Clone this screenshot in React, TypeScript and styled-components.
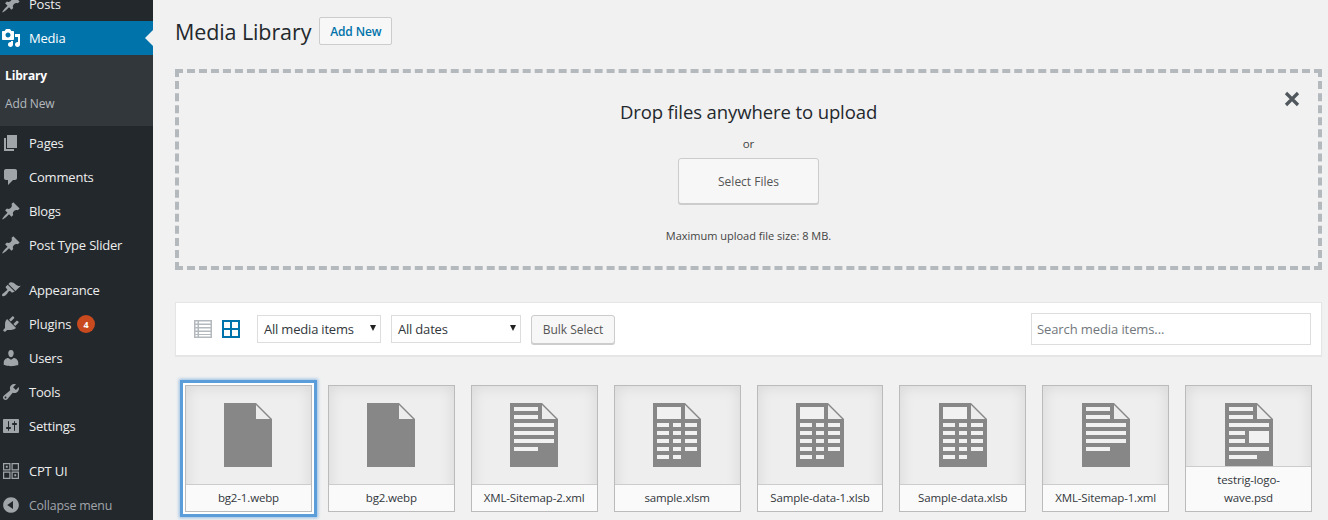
import React from "react";
import styled, { createGlobalStyle } from "styled-components";

const FONT = `"Open Sans", "Noto Sans", "Liberation Sans", sans-serif`;

const Global = createGlobalStyle`
  html, body { margin: 0; padding: 0; width: 1328px; height: 520px; overflow: hidden; background: #f1f1f1; }
  * { box-sizing: border-box; }
  body { font-family: ${FONT}; color: #444; }
`;

const Page = styled.div`
  display: flex;
  width: 1328px;
  height: 520px;
  overflow: hidden;
`;

const Sidebar = styled.nav`
  flex: 0 0 153px;
  height: 520px;
  background: #23282d;
  overflow: hidden;
`;

const Menu = styled.div`
  margin-top: -13px;
  display: flex;
  flex-direction: column;
`;

const MenuRow = styled.div<{ $active?: boolean; $gap?: number; $dim?: boolean }>`
  position: relative;
  display: flex;
  align-items: center;
  flex: 0 0 34px;
  height: 34px;
  margin-top: ${(p) => p.$gap ?? 0}px;
  background: ${(p) => (p.$active ? "#0073aa" : "transparent")};
  color: ${(p) => (p.$active ? "#fff" : p.$dim ? "#a0a5aa" : "#eee")};
  font-size: ${(p) => (p.$dim ? 12.4 : 13)}px;
  letter-spacing: -0.2px;
  svg { flex: 0 0 20px; margin-left: 1px; width: 20px; height: 20px; fill: ${(p) => (p.$active ? "#fff" : "#a0a5aa")}; }
`;

const MenuLabel = styled.span`
  margin-left: 8px;
  white-space: nowrap;
`;

const ActiveArrow = styled.span`
  position: absolute;
  right: 0;
  top: 9px;
  width: 0;
  height: 0;
  border: 8px solid transparent;
  border-left-width: 0;
  border-right-color: #f1f1f1;
`;

const Badge = styled.span`
  display: inline-flex;
  align-items: center;
  justify-content: center;
  width: 18px;
  height: 18px;
  margin-left: 6px;
  border-radius: 50%;
  background: #ca4a1f;
  color: #fff;
  font-size: 9px;
  font-weight: 700;
  letter-spacing: 0;
`;

const Submenu = styled.div`
  flex: 0 0 71px;
  height: 71px;
  padding-top: 7px;
  background: #32373c;
  display: flex;
  flex-direction: column;
`;

const SubItem = styled.div<{ $current?: boolean }>`
  height: 28px;
  line-height: 28px;
  padding-left: 5px;
  font-size: 12px;
  letter-spacing: -0.15px;
  font-weight: ${(p) => (p.$current ? 700 : 400)};
  color: ${(p) => (p.$current ? "#fff" : "#b4b9be")};
`;

const Main = styled.main`
  flex: 1;
  min-width: 0;
  padding: 0 6px 0 22px;
  display: flex;
  flex-direction: column;
`;

const Heading = styled.div`
  display: flex;
  align-items: center;
  height: 69px;
  padding-bottom: 7px;
`;

const Title = styled.h1`
  margin: 0;
  font-size: 21.5px;
  font-weight: 400;
  letter-spacing: -0.1px;
  color: #23282d;
`;

const AddNew = styled.button`
  margin-left: 8px;
  height: 28px;
  width: 73px;
  padding: 0;
  border: 1px solid #ccc;
  border-radius: 2px;
  background: #f7f7f7;
  color: #0073aa;
  font: 600 12px ${FONT};
  letter-spacing: -0.1px;
`;

const Uploader = styled.section`
  position: relative;
  height: 201px;
  border: 4px dashed #b4b9be;
  display: flex;
  flex-direction: column;
  align-items: center;
`;

const DropTitle = styled.div`
  margin-top: 26px;
  font-size: 18.5px;
  line-height: 26px;
  letter-spacing: -0.1px;
  color: #23282d;
`;

const OrText = styled.div`
  margin-top: 11px;
  font-size: 11.5px;
  line-height: 16px;
  color: #444;
`;

const SelectFiles = styled.button`
  margin-top: 6px;
  width: 141px;
  height: 46px;
  padding: 0;
  border: 1px solid #ccc;
  border-radius: 3px;
  background: #f7f7f7;
  box-shadow: 0 1px 0 #ccc;
  color: #555;
  font: 400 12px ${FONT};
`;

const MaxSize = styled.div`
  margin-top: 24px;
  font-size: 11px;
  line-height: 16px;
  color: #444;
`;

const CloseX = styled.svg`
  position: absolute;
  top: 16px;
  right: 16px;
  width: 20px;
  height: 20px;
  fill: none;
  stroke: #50575d;
  stroke-width: 3.2;
`;

const Toolbar = styled.section`
  margin-top: 32px;
  height: 54px;
  flex: 0 0 54px;
  display: flex;
  align-items: center;
  padding-left: 18px;
  background: #fff;
  border: 1px solid #e5e5e5;
  box-shadow: 0 1px 1px rgba(0, 0, 0, 0.04);
`;

const ViewIcon = styled.svg<{ $on?: boolean }>`
  width: 18px;
  height: 18px;
  margin-right: 10px;
  flex: none;
  color: ${(p) => (p.$on ? "#0073aa" : "#b4b9be")};
`;

const FakeSelect = styled.div<{ $w: number }>`
  position: relative;
  display: flex;
  align-items: center;
  width: ${(p) => p.$w}px;
  height: 28px;
  margin-right: 10px;
  padding-left: 6px;
  background: #fff;
  border: 1px solid #ddd;
  font-size: 13px;
  letter-spacing: -0.2px;
  color: #32373c;
  &:first-of-type { margin-left: 7px; }
  &::after {
    content: "";
    position: absolute;
    right: 4px;
    top: 9px;
    border-style: solid;
    border-width: 6px 3.5px 0;
    border-color: #222 transparent transparent;
  }
`;

const Bulk = styled.button`
  width: 84px;
  height: 29px;
  padding: 0;
  border: 1px solid #ccc;
  border-radius: 3px;
  background: #f7f7f7;
  box-shadow: 0 1px 0 #ccc;
  color: #555;
  font: 400 12px ${FONT};
`;

const Search = styled.div`
  margin-left: auto;
  margin-right: 10px;
  width: 280px;
  height: 32px;
  display: flex;
  align-items: center;
  padding-left: 5px;
  border: 1px solid #ddd;
  font-size: 13px;
  letter-spacing: -0.1px;
  color: #72777c;
`;

const Grid = styled.section`
  margin-top: 29px;
  padding: 0 10px;
  display: grid;
  grid-template-columns: repeat(8, 1fr);
  column-gap: 16px;
`;

const Card = styled.div<{ $selected?: boolean }>`
  position: relative;
  height: 127px;
  overflow: visible;
  background: #eee;
  border: 1px solid #bbb;
  box-shadow: inset 0 0 15px rgba(0, 0, 0, 0.1);
  display: flex;
  justify-content: center;
  ${(p) => p.$selected && "outline: 1px solid #fff; box-shadow: inset 0 0 15px rgba(0,0,0,.1), 0 0 0 2px #fff, 0 0 0 5px #5b9dd9, 0 0 3px 6px rgba(91,157,217,.6);"}
`;

const DocIcon = styled.svg`
  margin-top: 17px;
  width: 48px;
  height: 64px;
  flex: none;
`;

const FileName = styled.div`
  position: absolute;
  left: 0;
  right: 0;
  bottom: 0;
  padding: 4px 10px;
  background: #fafafa;
  border-top: 1px solid #ccc;
  text-align: center;
  font-size: 11.5px;
  line-height: 18px;
  letter-spacing: -0.15px;
  color: #32373c;
  overflow-wrap: anywhere;
`;

const P: Record<string, string> = {
  post: "M10.44 3.02l1.82-1.82 6.36 6.35-1.83 1.82c-1.05-.68-2.48-.57-3.41.36l-.75.75c-.92.93-1.04 2.35-.35 3.41l-1.83 1.82-2.41-2.41-2.8 2.79c-.42.42-3.38 2.71-3.8 2.29s1.86-3.39 2.28-3.81l2.79-2.79L4.1 9.36l1.83-1.82c1.05.69 2.48.57 3.4-.36l.75-.75c.93-.92 1.05-2.35.36-3.41z",
  media: "M13 11V4c0-.55-.45-1-1-1h-1.67L9 1H5L3.67 3H2c-.55 0-1 .45-1 1v7c0 .55.45 1 1 1h10c.55 0 1-.45 1-1zM7 4.5c1.38 0 2.5 1.12 2.5 2.5S8.38 9.5 7 9.5 4.5 8.38 4.5 7 5.62 4.5 7 4.5zM14 6h5v10.5c0 1.38-1.12 2.5-2.5 2.5S14 17.88 14 16.5s1.12-2.5 2.5-2.5c.17 0 .34.02.5.05V9h-3V6zm-4 8.05V13h2v3.5c0 1.38-1.12 2.5-2.5 2.5S7 17.88 7 16.5 8.12 14 9.5 14c.17 0 .34.02.5.05z",
  page: "M6 15V2h10v13H6zm-1 1h8v2H3V5h2v11z",
  comments: "M5 2h9c1.1 0 2 .9 2 2v7c0 1.1-.9 2-2 2h-2l-5 5v-5H5c-1.1 0-2-.9-2-2V4c0-1.1.9-2 2-2z",
  appearance: "M14.48 11.06L7.41 3.99l1.5-1.5c.5-.56 2.3-.47 3.51.32 1.21.8 1.43 1.28 2.91 2.1 1.18.64 2.45 1.26 4.45.85zm-.71.71L6.7 4.7 4.93 6.47c-.39.39-.39 1.02 0 1.41l1.06 1.06c.39.39.39 1.03 0 1.42-.6.6-1.43 1.11-2.21 1.69-.35.26-.7.53-1.01.84C1.43 13.23.4 14.89 1.41 15.9c1.02 1.01 2.67-.02 4.01-1.36.31-.31.58-.66.85-1.02.57-.78 1.08-1.61 1.69-2.21.39-.39 1.02-.39 1.41 0l1.06 1.06c.39.39 1.02.39 1.41 0z",
  plugins: "M13.11 4.36L9.87 7.6 8 5.73l3.24-3.24c.35-.34 1.05-.2 1.56.32.52.51.66 1.21.31 1.55zm-8 1.77l.91-1.12 9.01 9.01-1.19.84c-.71.71-2.63 1.16-3.82 1.16H6.14L4.9 17.26c-.59.59-1.54.59-2.12 0-.59-.58-.59-1.53 0-2.12l1.24-1.24v-3.88c0-1.13.4-3.19 1.09-3.89zm7.26 3.97l3.24-3.24c.34-.35 1.04-.21 1.55.31.52.51.66 1.21.31 1.55l-3.24 3.25z",
  users: "M10 9.25c-2.27 0-2.73-3.44-2.73-3.44C7 4.02 7.82 2 9.97 2c2.16 0 2.98 2.02 2.71 3.81 0 0-.41 3.44-2.68 3.44zm0 2.57L12.72 10c2.39 0 4.52 2.33 4.52 4.53v2.49s-3.65 1.13-7.24 1.13c-3.65 0-7.24-1.13-7.24-1.13v-2.49c0-2.25 1.94-4.48 4.47-4.48z",
  tools: "M16.68 9.77c-1.34 1.34-3.3 1.67-4.95.99l-5.41 6.52c-.99.99-2.59.99-3.58 0s-.99-2.59 0-3.57l6.52-5.42c-.68-1.65-.35-3.61.99-4.95 1.28-1.28 3.12-1.62 4.72-1.06l-2.89 2.89 2.82 2.82 2.86-2.87c.53 1.58.18 3.39-1.08 4.65zM3.81 16.21c.4.39 1.04.39 1.43 0 .4-.4.4-1.04 0-1.43-.39-.4-1.03-.4-1.43 0-.39.39-.39 1.03 0 1.43z",
  settings: "M18 16V4c0-.55-.45-1-1-1H3c-.55 0-1 .45-1 1v12c0 .55.45 1 1 1h14c.55 0 1-.45 1-1zM8 11h1c.55 0 1 .45 1 1s-.45 1-1 1H8v1.5c0 .28-.22.5-.5.5s-.5-.22-.5-.5V13H6c-.55 0-1-.45-1-1s.45-1 1-1h1V5.5c0-.28.22-.5.5-.5s.5.22.5.5V11zm5-2h-1c-.55 0-1-.45-1-1s.45-1 1-1h1V5.5c0-.28.22-.5.5-.5s.5.22.5.5V7h1c.55 0 1 .45 1 1s-.45 1-1 1h-1v5.5c0 .28-.22.5-.5.5s-.5-.22-.5-.5V9z",
  collapse: "M10 2.16c4.33 0 7.84 3.51 7.84 7.84s-3.51 7.84-7.84 7.84S2.16 14.33 2.16 10 5.71 2.16 10 2.16zm2 11.72V6.12L6.18 9.97z",
  cpt: "M2 2h7.5v7.5H2zM3.2 3.2v5.1h5.1V3.2zM4.8 4.8h1.9v1.9H4.8zM10.5 2H18v7.5h-7.5zM11.7 3.2v5.1h5.1V3.2zM2 10.5h7.5V18H2zM3.2 11.7v5.1h5.1v-5.1zM10.5 10.5H18V18h-7.5zM11.7 11.7v5.1h5.1v-5.1zM13.3 13.3h1.9v1.9h-1.9z",
};

const MI = ({ n }: { n: string }) => (
  <svg viewBox="0 0 20 20" fillRule="evenodd"><path d={P[n]} /></svg>
);

const Bars = ({ rows }: { rows: number[][] }) => (
  <>
    {rows.map(([x, y, w, h], i) => (
      <rect key={i} x={x} y={y} width={w} height={h} fill="#f1f1f1" />
    ))}
  </>
);

type Kind = "default" | "text" | "sheet" | "psd";

const kinds: Record<Kind, number[][]> = {
  default: [],
  text: [[4,4,24,4],[4,12,24,4],[4,20,40,4],[4,28,40,4],[4,36,40,4],[4,44,24,4]],
  sheet: [
    [4,4,24,12],
    [4,20,12,4],[20,20,8,4],[32,20,12,4],
    [4,28,12,4],[20,28,8,4],[32,28,12,4],
    [4,36,12,4],[20,36,8,4],[32,36,12,4],
    [4,44,12,4],[20,44,8,4],[32,44,12,4],
    [4,52,12,4],[20,52,8,4],
  ],
  psd: [[4,4,24,4],[4,12,24,4],[4,20,40,4],[4,28,16,4],[4,36,16,4],[24,28,20,12],[4,44,40,4],[4,52,28,4]],
};

const Doc = ({ kind }: { kind: Kind }) => (
  <DocIcon viewBox="0 0 48 64">
    <path d="M0 0H32L48 16V64H0Z" fill="#878787" />
    <path d="M32 2L46 16H32Z" fill="#ececec" />
    <Bars rows={kinds[kind]} />
  </DocIcon>
);

const files: { name: string; kind: Kind; selected?: boolean }[] = [
  { name: "bg2-1.webp", kind: "default", selected: true },
  { name: "bg2.webp", kind: "default" },
  { name: "XML-Sitemap-2.xml", kind: "text" },
  { name: "sample.xlsm", kind: "sheet" },
  { name: "Sample-data-1.xlsb", kind: "sheet" },
  { name: "Sample-data.xlsb", kind: "sheet" },
  { name: "XML-Sitemap-1.xml", kind: "text" },
  { name: "testrig-logo-wave.psd", kind: "psd" },
];

export default function App() {
  return (
    <Page>
      <Global />
      <Sidebar>
        <Menu>
          <MenuRow><MI n="post" /><MenuLabel>Posts</MenuLabel></MenuRow>
          <MenuRow $active><MI n="media" /><MenuLabel>Media</MenuLabel><ActiveArrow /></MenuRow>
          <Submenu>
            <SubItem $current>Library</SubItem>
            <SubItem>Add New</SubItem>
          </Submenu>
          <MenuRow><MI n="page" /><MenuLabel>Pages</MenuLabel></MenuRow>
          <MenuRow><MI n="comments" /><MenuLabel>Comments</MenuLabel></MenuRow>
          <MenuRow><MI n="post" /><MenuLabel>Blogs</MenuLabel></MenuRow>
          <MenuRow><MI n="post" /><MenuLabel>Post Type Slider</MenuLabel></MenuRow>
          <MenuRow $gap={11}><MI n="appearance" /><MenuLabel>Appearance</MenuLabel></MenuRow>
          <MenuRow><MI n="plugins" /><MenuLabel>Plugins</MenuLabel><Badge>4</Badge></MenuRow>
          <MenuRow><MI n="users" /><MenuLabel>Users</MenuLabel></MenuRow>
          <MenuRow><MI n="tools" /><MenuLabel>Tools</MenuLabel></MenuRow>
          <MenuRow><MI n="settings" /><MenuLabel>Settings</MenuLabel></MenuRow>
          <MenuRow $gap={11}><MI n="cpt" /><MenuLabel>CPT UI</MenuLabel></MenuRow>
          <MenuRow $dim><MI n="collapse" /><MenuLabel>Collapse menu</MenuLabel></MenuRow>
        </Menu>
      </Sidebar>
      <Main>
        <Heading>
          <Title>Media Library</Title>
          <AddNew>Add New</AddNew>
        </Heading>
        <Uploader>
          <CloseX viewBox="0 0 20 20"><path d="M4 4L16 16M16 4L4 16" /></CloseX>
          <DropTitle>Drop files anywhere to upload</DropTitle>
          <OrText>or</OrText>
          <SelectFiles>Select Files</SelectFiles>
          <MaxSize>Maximum upload file size: 8 MB.</MaxSize>
        </Uploader>
        <Toolbar>
          <ViewIcon viewBox="0 0 18 18">
            <path fill="currentColor" fillRule="evenodd" d="M0 0H18V18H0ZM1.5 1.5V3.5H3.5V1.5ZM5 1.5V3.5H16.5V1.5ZM1.5 5V7H3.5V5ZM5 5V7H16.5V5ZM1.5 8.5V10.5H3.5V8.5ZM5 8.5V10.5H16.5V8.5ZM1.5 12V14H3.5V12ZM5 12V14H16.5V12ZM1.5 15V16.5H3.5V15ZM5 15V16.5H16.5V15Z" />
          </ViewIcon>
          <ViewIcon viewBox="0 0 18 18" $on>
            <path fill="currentColor" fillRule="evenodd" d="M0 0H18V18H0ZM2 2V8H8V2ZM10 2V8H16V2ZM2 10V16H8V10ZM10 10V16H16V10Z" />
          </ViewIcon>
          <FakeSelect $w={124}>All media items</FakeSelect>
          <FakeSelect $w={130}>All dates</FakeSelect>
          <Bulk>Bulk Select</Bulk>
          <Search>Search media items...</Search>
        </Toolbar>
        <Grid>
          {files.map((f) => (
            <Card key={f.name} $selected={f.selected}>
              <Doc kind={f.kind} />
              <FileName>{f.name}</FileName>
            </Card>
          ))}
        </Grid>
      </Main>
    </Page>
  );
}
